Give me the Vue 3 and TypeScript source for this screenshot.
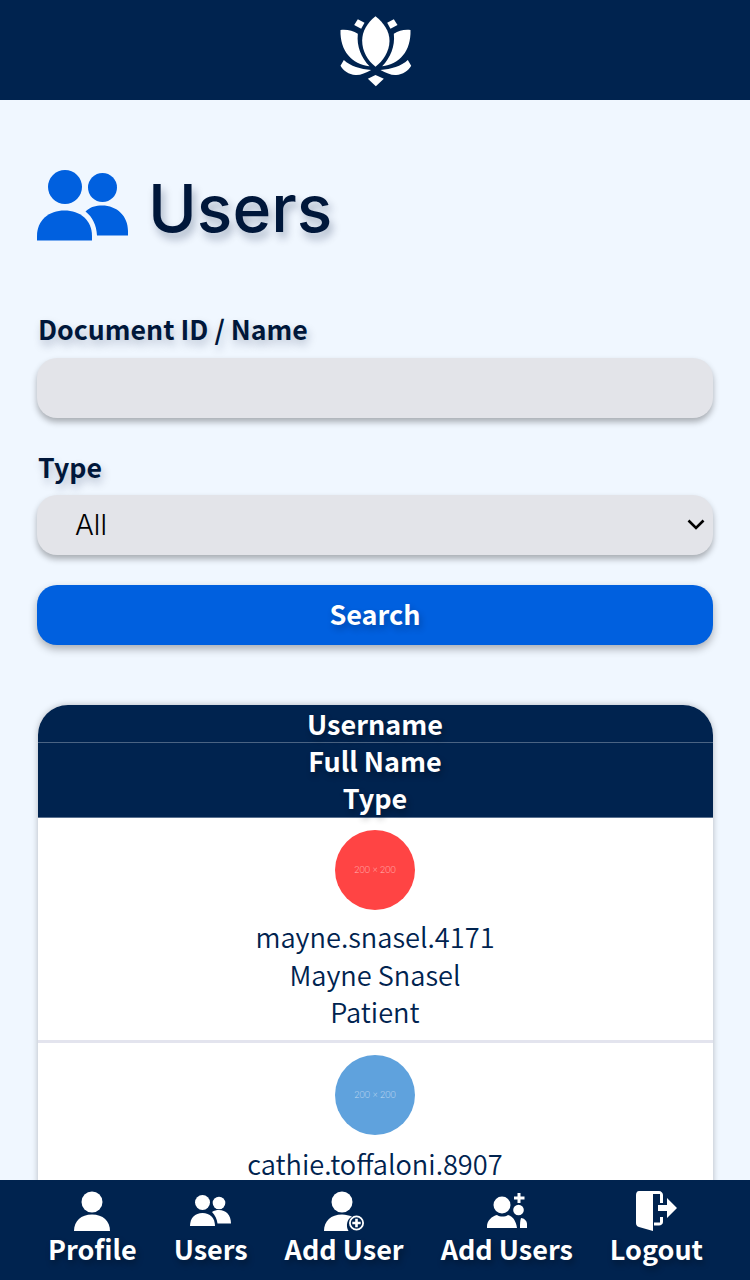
<script setup lang="ts">
import { ref } from 'vue';

interface UserRow {
  username: string;
  fullName: string;
  type: string;
  color: string;
}

const search = ref('');
const userType = ref('All');

const rows: UserRow[] = [
  { username: 'mayne.snasel.4171', fullName: 'Mayne Snasel', type: 'Patient', color: '#ff4444' },
  { username: 'cathie.toffaloni.8907', fullName: 'Cathie Toffaloni', type: 'Patient', color: '#5fa2dd' },
];
</script>

<template>
  <div class="page">
    <header class="topbar">
      <svg class="logo" viewBox="50 35 230 225" width="77" height="75">
        <path d="M165 45C190 65 207 90 207 118C207 150 188 178 165 196C142 178 125 150 125 118C125 90 140 65 165 45Z" />
        <path d="M60 86C80 84 97 88 112 97C108 135 122 168 147 195C95 188 58 150 60 86Z" />
        <path d="M270 86C250 84 235 88 220 97C224 135 210 168 185 195C237 188 272 150 270 86Z" />
        <path d="M112 54L132 64L122 82L101 71Z" />
        <path d="M220 54L200 64L210 82L231 71Z" />
        <path d="M70 176C90 195 120 203 152 206C135 215 120 222 105 221C85 219 68 208 60 193Z" />
        <path d="M262 176C242 195 212 203 180 206C197 215 212 222 227 221C247 219 264 208 272 193Z" />
        <path d="M165 221L190 232L166 255L142 232Z" />
      </svg>
    </header>

    <main class="content">
      <h1 class="title">
        <svg class="title-icon" viewBox="37 170 92 71" width="92" height="71">
          <circle cx="65" cy="187" r="17" />
          <circle cx="102.500" cy="187.500" r="14.500" />
          <path d="M37 240.500V236C37 220 49 210.500 64.500 210.500C80 210.500 92 220 92 236V240.500Z" />
          <path d="M85.500 211.500C90 207 96 205.500 102 205.500C117 205.500 128 216 128 231V235.500H97C96.500 225 92.500 217 85.500 211.500Z" />
        </svg>
        <span class="title-text">Users</span>
      </h1>

      <form class="filters" @submit.prevent>
        <label class="field-label" for="search">Document ID / Name</label>
        <input id="search" v-model="search" class="control" type="text" />
        <label class="field-label second" for="type">Type</label>
        <div class="select-wrap">
          <select id="type" v-model="userType" class="control select">
            <option>All</option>
            <option>Patient</option>
            <option>Doctor</option>
          </select>
          <svg class="chevron" viewBox="0 0 18 11" width="18" height="11">
            <path d="M1.500 1.500L9 9L16.500 1.500" />
          </svg>
        </div>
        <button class="search-btn" type="submit">Search</button>
      </form>

      <section class="table">
        <div class="thead">
          <div class="th first">Username</div>
          <div class="th">Full Name</div>
          <div class="th">Type</div>
        </div>
        <div v-for="row in rows" :key="row.username" class="row">
          <div class="avatar" :style="{ background: row.color }">200 × 200</div>
          <div class="cell">{{ row.username }}</div>
          <div class="cell">{{ row.fullName }}</div>
          <div class="cell">{{ row.type }}</div>
        </div>
      </section>
    </main>

    <nav class="bottom-nav">
      <a class="nav-item">
        <span class="nav-icon">
          <svg viewBox="0 0 36 40" width="36" height="40">
            <circle cx="18" cy="11" r="10.500" />
            <path d="M0 40C0 30 7 23.500 18 23.500C29 23.500 36 30 36 40Z" />
          </svg>
        </span>
        <span>Profile</span>
      </a>
      <a class="nav-item">
        <span class="nav-icon">
          <svg viewBox="0 0 42 32" width="42" height="32">
            <circle cx="12.500" cy="7.500" r="7.500" />
            <circle cx="29" cy="8" r="6.300" />
            <path d="M0 31C0 23 5 18 12.500 18C20 18 25 23 25 31Z" />
            <path d="M22 17C24 15.500 26.500 15 29 15C36 15 41 20 41 28.500H27.500C27 24 25 20 22 17Z" />
          </svg>
        </span>
        <span>Users</span>
      </a>
      <a class="nav-item">
        <span class="nav-icon">
          <svg viewBox="0 0 40 40" width="40" height="40">
            <circle cx="18" cy="11" r="10.500" />
            <path d="M0 40C0 30 7 23.500 18 23.500C22 23.500 25 24.500 28 25.500C23 28 21.500 35 24.500 40Z" />
            <circle cx="32.500" cy="32" r="6.600" fill="none" stroke="#fff" stroke-width="1.800" />
            <path d="M31.200 27.800H33.800V30.700H36.700V33.300H33.800V36.200H31.200V33.300H28.300V30.700H31.200Z" />
          </svg>
        </span>
        <span>Add User</span>
      </a>
      <a class="nav-item">
        <span class="nav-icon">
          <svg viewBox="0 0 40 36" width="40" height="36">
            <path d="M30.500 0H33.500V3.500H37.500V6.500H33.500V10H30.500V6.500H27V3.500H30.500Z" />
            <circle cx="15" cy="12" r="8.500" />
            <circle cx="31.500" cy="17" r="5.300" />
            <path d="M0 35V33C0 28 5 23 10 22C13 24 18 24 21 22C25 23 29 27 30 35Z" />
            <path d="M34 25C37 25 40 28 40 31V35H33C33 31 33 28 34 25Z" />
          </svg>
        </span>
        <span>Add Users</span>
      </a>
      <a class="nav-item">
        <span class="nav-icon">
          <svg viewBox="0 0 41 40" width="41" height="40">
            <path d="M0 4C0 2 1 0 3 0H23C25 0 27 2 27 4V12H24V3H17V40L3 36C1 35.500 0 34 0 32Z" />
            <path d="M24 26H27V31C27 33 25 34.500 23 34.500H18V31.500H24Z" />
            <path d="M22 14H31V7L41 17L31 27V20H22Z" />
          </svg>
        </span>
        <span>Logout</span>
      </a>
    </nav>
  </div>
</template>

<style>
html,
body {
  margin: 0;
  background: #f0f7ff;
}
</style>

<style scoped>
.page {
  height: 1280px;
  overflow: hidden;
  background: #f0f7ff;
  font-family: "Noto Sans CJK JP", "Noto Sans", sans-serif;
  color: #00173a;
}

.topbar {
  position: fixed;
  top: 0;
  left: 0;
  right: 0;
  height: 100px;
  background: #00234f;
  display: flex;
  align-items: center;
  justify-content: center;
  z-index: 2;
}

.logo {
  fill: #fff;
}

.content {
  box-sizing: border-box;
  height: 1180px;
  overflow: hidden;
  padding: 100px 37px 0;
}

.title {
  margin: 0;
  padding-top: 70px;
  display: flex;
  align-items: center;
  gap: 19px;
  height: 71px;
  font-family: Inter, sans-serif;
  font-size: 66px;
  font-weight: 550;
  line-height: 71px;
  text-shadow: 3px 6px 9px rgba(0, 23, 58, 0.3);
}

.title-text {
  padding-top: 5px;
}

.title-icon {
  fill: #0060df;
  flex: none;
}

.filters {
  display: flex;
  flex-direction: column;
  margin-top: 68px;
}

.field-label {
  font-size: 26.700px;
  font-weight: 700;
  line-height: 39px;
  margin-bottom: 10px;
  padding-left: 1px;
  text-shadow: 2px 5px 8px rgba(0, 23, 58, 0.25);
}

.second {
  margin-top: 29px;
  margin-bottom: 9px;
  line-height: 39px;
}

.control {
  display: block;
  box-sizing: border-box;
  height: 60px;
  width: 100%;
  margin: 0;
  border: 0;
  border-radius: 20px;
  background: #e3e4e9;
  box-shadow: 0 4px 6px rgba(0, 0, 0, 0.3);
  outline: 0;
}

.select-wrap {
  position: relative;
}

.select {
  appearance: none;
  padding-left: 38px;
  font-family: Inter, sans-serif;
  font-size: 28px;
  font-weight: 300;
  color: #000;
}

.chevron {
  position: absolute;
  top: 24px;
  right: 8px;
  fill: none;
  stroke: #000;
  stroke-width: 2.600;
  pointer-events: none;
}

.search-btn {
  height: 60px;
  margin-top: 30px;
  padding: 0 0 4px;
  border: 0;
  border-radius: 20px;
  background: #0060df;
  color: #fff;
  font-family: inherit;
  font-size: 27px;
  font-weight: 700;
  text-shadow: 2px 4px 6px rgba(0, 23, 58, 0.3);
  box-shadow: 0 4px 8px rgba(0, 0, 0, 0.3);
}

.table {
  margin: 60px 0.500px 0;
  background: #fff;
  border-radius: 30px 30px 0 0;
  box-shadow: 0 0 6px rgba(0, 0, 0, 0.25);
  overflow: hidden;
  text-align: center;
}

.thead {
  background: #00234f;
  color: #fff;
  font-size: 27px;
  font-weight: 700;
  border-bottom: 1px solid #5a7190;
}

.th {
  height: 37px;
  line-height: 35px;
  text-shadow: 2px 4px 6px rgba(0, 0, 0, 0.3);
}

.first {
  border-bottom: 1px solid #4a6383;
  line-height: 37px;
}

.row {
  padding: 12px 0 8px;
  border-bottom: 3px solid #e3e4ee;
  font-size: 27.200px;
  font-weight: 350;
  color: #00234f;
}

.avatar {
  width: 80px;
  height: 80px;
  margin: 0 auto 8px;
  border-radius: 50%;
  color: rgba(255, 255, 255, 0.6);
  font-family: Lato, sans-serif;
  font-size: 9px;
  line-height: 80px;
}

.row + .row .avatar {
  margin-bottom: 10px;
}

.cell {
  height: 37.500px;
  line-height: 37.500px;
}

.cell:last-child {
  margin-bottom: 1px;
}

.bottom-nav {
  position: fixed;
  left: 0;
  right: 0;
  bottom: 0;
  height: 100px;
  box-sizing: border-box;
  padding: 0 10px 0 11px;
  background: #00234f;
  display: flex;
  justify-content: space-evenly;
  z-index: 2;
}

.nav-item {
  height: 100px;
  box-sizing: border-box;
  padding-top: 10px;
  display: flex;
  flex-direction: column;
  align-items: center;
  color: #fff;
  font-size: 27px;
  font-weight: 700;
  line-height: 35px;
  text-shadow: 2px 4px 6px rgba(0, 0, 0, 0.3);
}

.nav-icon {
  height: 41px;
  display: flex;
  align-items: center;
  justify-content: center;
}

.nav-icon svg {
  fill: #fff;
}
</style>
